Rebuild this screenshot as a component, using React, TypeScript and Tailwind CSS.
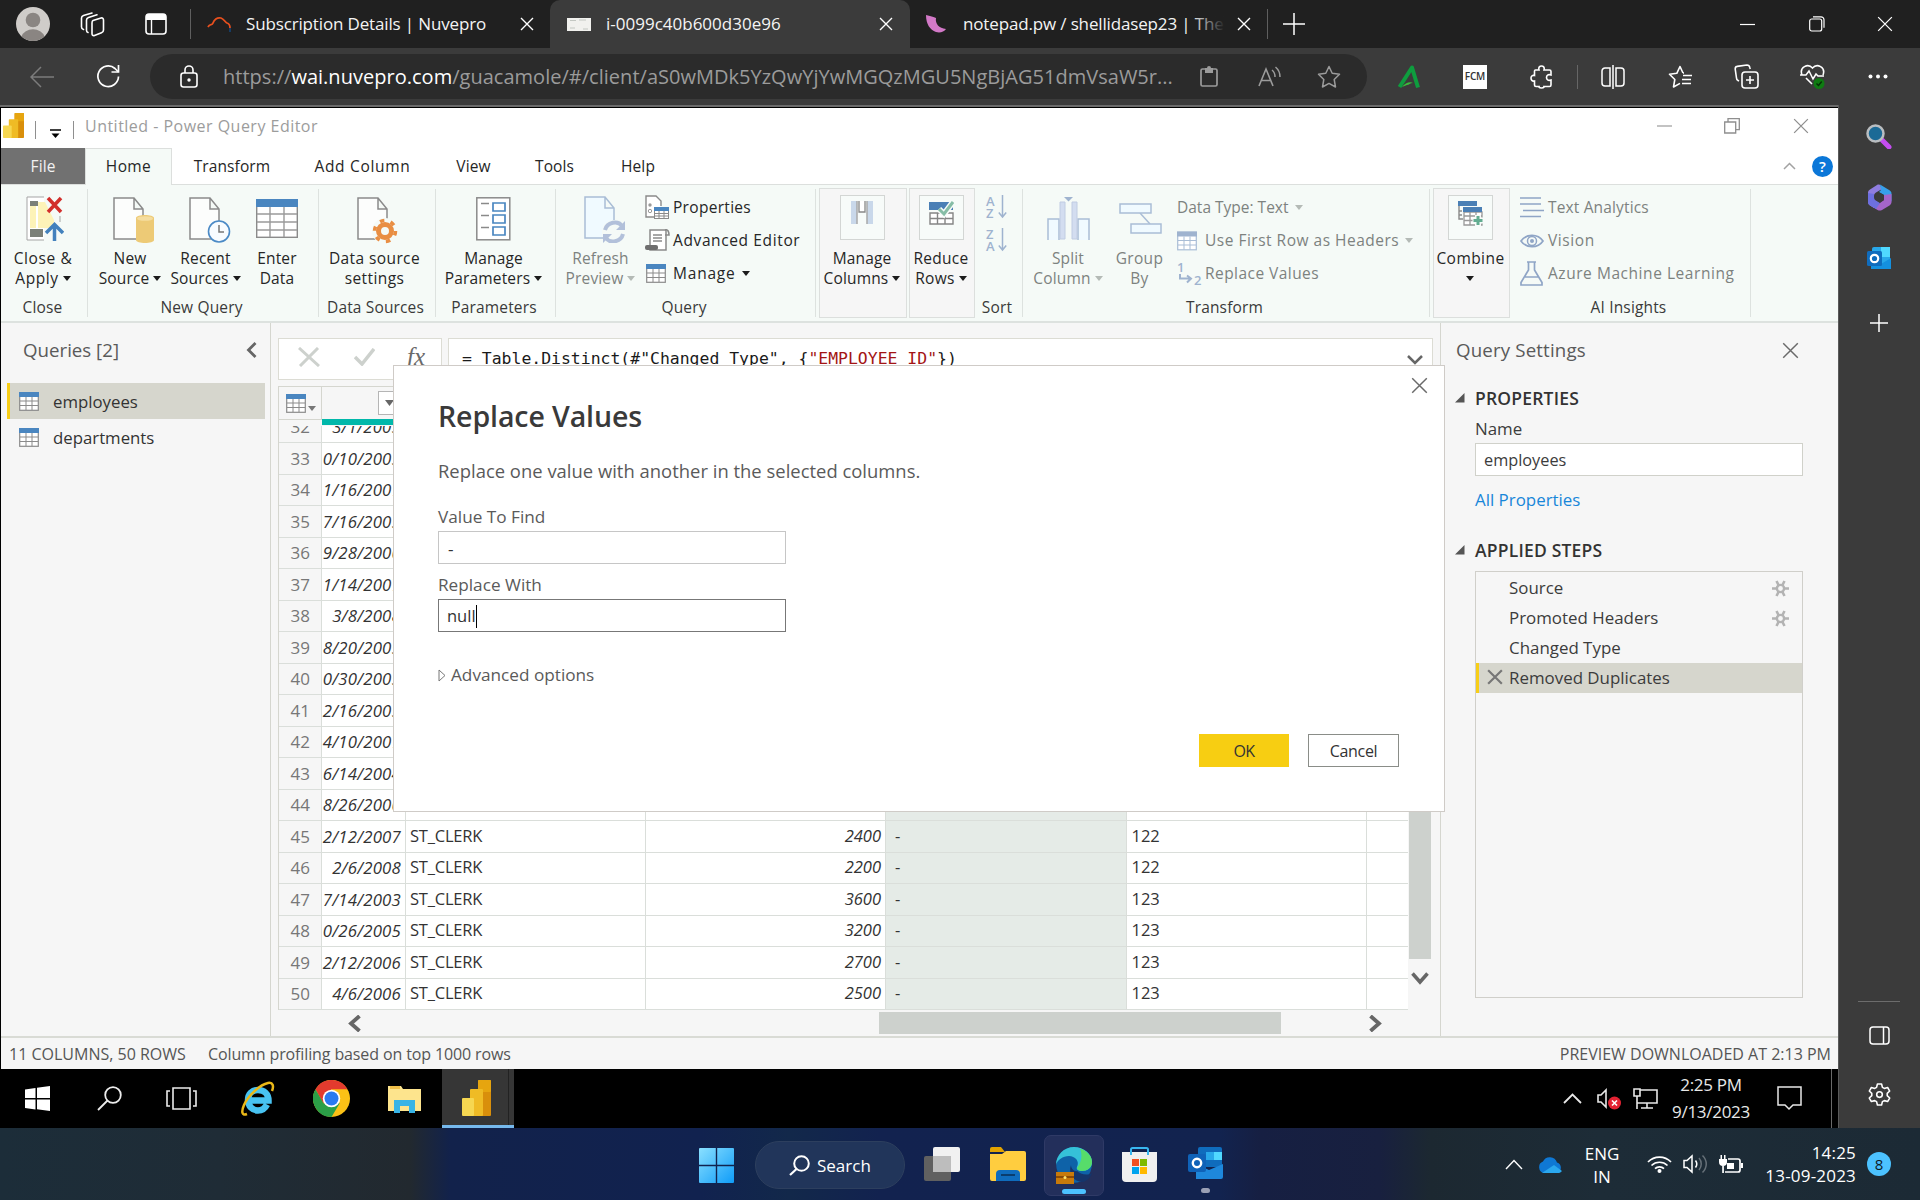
import React from "react";

type Kids = { children?: React.ReactNode; className?: string };

/* ---------- shared pieces ---------- */

function Ico({ w, h, vb, className = "", children }: { w: number; h: number; vb?: string } & Kids) {
  return (
    <svg width={w} height={h} viewBox={vb ?? `0 0 ${w} ${h}`} fill="none" className={`shrink-0 ${className}`}>
      {children}
    </svg>
  );
}

const Caret = ({ dim = false, className = "" }: { dim?: boolean; className?: string }) => (
  <Ico w={8} h={5} className={`inline-block align-middle ${className}`}>
    <path d="M0 0h8L4 5z" fill={dim ? "#b4bab6" : "#1c1c1c"} />
  </Ico>
);

const Cross = ({ size = 14, color = "#fff", width = 1.4, className = "" }: { size?: number; color?: string; width?: number; className?: string }) => (
  <Ico w={size} h={size} vb="0 0 14 14" className={className}>
    <path d="M1 1l12 12M13 1L1 13" stroke={color} strokeWidth={width} />
  </Ico>
);

const PowerBi = ({ w, h }: { w: number; h: number }) => (
  <svg width={w} height={h} viewBox="0 0 29 36" preserveAspectRatio="none" className="shrink-0">
    <rect x="16" y="0" width="13" height="36" rx="1" fill="#d98f0b" />
    <rect x="16" y="0" width="13" height="12" rx="1" fill="#e6a50f" />
    <rect x="8" y="9" width="13" height="27" rx="1" fill="#efbb25" />
    <rect x="0" y="18" width="12" height="18" rx="1" fill="#f6d751" />
  </svg>
);

const TableIcon = ({ w = 20, h = 19, head = "#4a86c0", line = "#8b8b8b" }: { w?: number; h?: number; head?: string; line?: string }) => (
  <Ico w={w} h={h} vb="0 0 20 19">
    <rect x=".7" y=".7" width="18.6" height="17.6" fill="#fff" stroke={line} strokeWidth="1.2" />
    <path d="M1 9h18M1 13.5h18M7 5v13M13 5v13" stroke={line} strokeWidth="1" />
    <rect x="0" y="0" width="20" height="5" fill={head} />
  </Ico>
);

/* ---------- browser chrome ---------- */

function TabStrip() {
  return (
    <div className="flex h-[48px] items-center bg-[#202020] text-[17px] tracking-[-0.15px] text-[#f4f4f4]">
      <Ico w={34} h={34} className="ml-[16px]">
        <circle cx="17" cy="17" r="17" fill="#cfccc9" />
        <circle cx="17" cy="13" r="7.3" fill="#8a8582" />
        <path d="M5.5 29.5a12 10 0 0123 0A17 17 0 0117 34 17 17 0 015.5 29.5z" fill="#8a8582" />
      </Ico>
      <Ico w={25} h={25} className="ml-[30px]">
        <path d="M13 8.500l8-2.500c1.600-.4 2.500.5 2.500 2v10c0 1.500-.6 2.300-2 2.800l-7 2.700c-1.600.5-2.500-.3-2.500-1.800V11c0-1.300.3-2.100 1-2.500z" stroke="#fff" strokeWidth="1.6" />
        <path d="M8 20.500c-1-.3-1.500-1.200-1.500-2.200V8c0-1.300.7-2.200 2-2.600L17 2.800M3.500 17.500c-1.200-.3-2-1.300-2-2.500V6c0-1.300.7-2.200 2-2.600L12 1" stroke="#fff" strokeWidth="1.6" strokeLinecap="round" />
      </Ico>
      <Ico w={22} h={22} className="ml-[40px]">
        <rect x="1" y="1" width="20" height="20" rx="3" stroke="#fff" strokeWidth="1.6" />
        <path d="M1 4a3 3 0 013-3h14a3 3 0 013 3v3H1z" fill="#fff" />
        <path d="M6.500 7v14" stroke="#fff" strokeWidth="1.4" />
      </Ico>
      <div className="ml-[23px] h-[30px] w-px bg-[#5f5f5f]" />
      <Ico w={24} h={17} className="ml-[16px]">
        <path d="M1 11c2-4 4-1 5-4s4-6 8-5c3 1 4 4 6 5 2 .5 3 2 3 5" stroke="#e8501e" strokeWidth="1.8" />
        <path d="M23 12v4" stroke="#17406b" strokeWidth="1.8" />
      </Ico>
      <div className="ml-[15px] w-[260px] shrink-0 whitespace-nowrap">Subscription Details | Nuvepro</div>
      <Cross className="ml-[14px]" />
      <div className="ml-[16px] flex h-full w-[360px] shrink-0 items-center rounded-t-[10px] bg-[#3b3b3b]">
        <Ico w={24} h={13} className="ml-[17px]">
          <rect width="24" height="13" fill="#f1f1ee" />
          <path d="M3 2.500h6M12 2h7M3 10h5M16 11h5" stroke="#c3c7c2" />
        </Ico>
        <div className="ml-[15px] w-[266px] shrink-0 whitespace-nowrap tracking-[0px]">i-0099c40b600d30e96</div>
        <Cross className="ml-[7px]" />
      </div>
      <Ico w={21} h={18} className="ml-[16px]">
        <path d="M0 0c4 1 8 2 10 3-1 6 3 10 10 11-2 3-6 4-10 3C4 15 0 9 0 0z" fill="#d279c7" />
      </Ico>
      <div className="relative ml-[16px] w-[262px] shrink-0 overflow-hidden whitespace-nowrap">
        notepad.pw / shellidasep23 | The
        <div className="absolute inset-y-0 right-0 w-[34px] bg-gradient-to-r from-transparent to-[#202020]" />
      </div>
      <Cross className="ml-[12px]" />
      <div className="ml-[16px] h-[30px] w-px bg-[#5f5f5f]" />
      <Ico w={22} h={22} className="ml-[15px]">
        <path d="M11 0v22M0 11h22" stroke="#fff" strokeWidth="1.5" />
      </Ico>
      <Ico w={15} h={15} className="ml-[435px]">
        <path d="M0 7.500h15" stroke="#fff" strokeWidth="1.2" />
      </Ico>
      <Ico w={16} h={16} className="ml-[54px]">
        <rect x=".7" y="3" width="12" height="12" rx="2" stroke="#fff" strokeWidth="1.2" />
        <path d="M4 .8h8a3 3 0 013 3v8" stroke="#fff" strokeWidth="1.2" />
      </Ico>
      <Cross size={16} width={1.1} className="ml-[52px]" />
    </div>
  );
}

function Toolbar() {
  return (
    <div className="flex h-[57px] items-center bg-[#3b3b3b]">
      <Ico w={24} h={22} className="ml-[30px]">
        <path d="M11 1L1 11l10 10M1 11h23" stroke="#7c7c7c" strokeWidth="1.500" />
      </Ico>
      <Ico w={25} h={25} className="ml-[42px]">
        <path d="M22.500 12.500a10.300 10.300 0 11-3.500-8l3.500 3.500" stroke="#fff" strokeWidth="1.700" />
        <path d="M22.500 1v7h-7" stroke="#fff" strokeWidth="1.700" />
      </Ico>
      <div className="ml-[29px] flex h-[45px] w-[1217px] shrink-0 items-center rounded-full bg-[#2b2b2b]">
        <Ico w={18} h={23} className="ml-[30px]">
          <rect x="1" y="8" width="16" height="14" rx="2.500" stroke="#fff" strokeWidth="1.600" />
          <path d="M5 8V5a4 4 0 018 0v3" stroke="#fff" strokeWidth="1.600" />
          <circle cx="9" cy="15" r="1.700" fill="#fff" />
        </Ico>
        <div className="ml-[25px] w-[962px] shrink-0 whitespace-nowrap text-[20px] tracking-[0.020px] text-[#9b9b9b]">
          https://<span className="text-white">wai.nuvepro.com</span>/guacamole/#/client/aS0wMDk5YzQwYjYwMGQzMGU5NgBjAG51dmVsaW5r...
        </div>
        <Ico w={18} h={21} className="ml-[15px]">
          <rect x="1" y="3" width="16" height="17" rx="1.500" stroke="#9b9b9b" strokeWidth="1.700" />
          <path d="M5 2h8v5H5z" fill="#9b9b9b" />
          <circle cx="9" cy="2" r="2" fill="#9b9b9b" />
        </Ico>
        <Ico w={24} h={21} className="ml-[40px]">
          <path d="M1 20L8 3l7 17M3.500 14.500h9" stroke="#9b9b9b" strokeWidth="1.600" />
          <path d="M14 4c2 1.500 3 4 3 7M17.500 1c3 2.500 4.500 5.500 4.500 10" stroke="#9b9b9b" strokeWidth="1.500" />
        </Ico>
        <Ico w={24} h={24} className="ml-[35px]" vb="0 0 24 24">
          <path d="M12 1.500l3.200 6.800 7.300 1-5.300 5.200 1.300 7.500-6.500-3.600L5.500 22l1.300-7.500L1.500 9.300l7.300-1z" stroke="#9b9b9b" strokeWidth="1.500" strokeLinejoin="round" />
        </Ico>
      </div>
      <Ico w={23} h={24} className="ml-[30px]">
        <path d="M2.500 22L15 2.500l6 20" stroke="#0e9d3e" strokeWidth="4" strokeLinejoin="round" />
        <path d="M5 22c3-4 8-6 11-4-3 0-4 2-6 2z" fill="#3dbb3d" />
      </Ico>
      <div className="ml-[43px] flex h-[24px] w-[24px] items-center justify-center bg-white text-[10px] font-semibold tracking-[-0.2px] text-[#333]">FCM</div>
      <Ico w={22} h={24} className="ml-[43px]">
        <path d="M5.500 5H9c-1-3 1-4 2.500-4S15 2 14 5h5.500c1 0 1.500.5 1.500 1.500V10c-3-1-4.500.5-4.500 2.500S18 16 21 15v5c0 1-.5 1.500-1.500 1.500H14s.5 1.500-2.500 1.500S9 21.500 9 21.500H6c-1 0-1.500-.5-1.500-1.500v-4C2 16.500 1 15 1 13s1.500-3 3.500-2.500V6c0-.6.400-1 1-1z" stroke="#fff" strokeWidth="1.600" />
      </Ico>
      <div className="ml-[25px] h-[24px] w-px bg-[#666]" />
      <Ico w={24} h={24} className="ml-[23px]">
        <path d="M9 3H4a3 3 0 00-3 3v12a3 3 0 003 3h5zM15 3h5a3 3 0 013 3v12a3 3 0 01-3 3h-5zM12 0v24" stroke="#fff" strokeWidth="1.500" />
      </Ico>
      <Ico w={25} h={24} className="ml-[43px]">
        <path d="M15 8l-3-6.500L8.800 8.300l-7.300 1 5.300 5.200L5.500 22l6.500-3.600" stroke="#fff" strokeWidth="1.600" strokeLinejoin="round" />
        <path d="M15 8h1M15 10.500h9M14 14.500h9M14 18.500h9" stroke="#fff" strokeWidth="1.500" />
      </Ico>
      <Ico w={25} h={25} className="ml-[41px]">
        <rect x="8" y="8" width="16" height="16" rx="3" stroke="#fff" strokeWidth="1.600" />
        <path d="M16 12v8M12 16h8M5 17l-1-.5c-1-.5-1.500-1.500-1.500-2.500L1.200 5c0-1.500 1-2.500 2-2.600L13 1c1.500 0 2.500 1 2.800 2.400l.4 1.600" stroke="#fff" strokeWidth="1.600" />
      </Ico>
      <Ico w={25} h={25} className="ml-[41px]">
        <path d="M2 11C-1 3 8-1 12.500 4 17-1 26 3 23 11M12 20l-6-6" stroke="#fff" strokeWidth="1.600" />
        <path d="M0 11h6l3-4 4 8 3-5 2 2h6" stroke="#fff" strokeWidth="1.500" />
        <circle cx="19" cy="19.500" r="5.500" fill="#0f7b12" />
        <path d="M16.500 19.500l2 2 3.200-4" stroke="#062f06" strokeWidth="1.400" />
      </Ico>
      <Ico w={20} h={5} className="ml-[43px]">
        <circle cx="2.500" cy="2.500" r="2" fill="#fff" />
        <circle cx="10" cy="2.500" r="2" fill="#fff" />
        <circle cx="17.500" cy="2.500" r="2" fill="#fff" />
      </Ico>
    </div>
  );
}

function EdgeSidebar() {
  return (
    <div className="flex w-[82px] shrink-0 flex-col items-center border-l border-[#5a5a5a] bg-[#3b3b3b] pr-px">
      <Ico w={26} h={25} className="mt-[19px]">
        <path d="M16 16l7 7" stroke="#c44df0" strokeWidth="5" strokeLinecap="round" />
        <circle cx="9.500" cy="9.500" r="8" fill="#1b6a96" stroke="#b9bdc0" strokeWidth="2.500" />
      </Ico>
      <Ico w={25} h={27} className="mt-[35px]">
        <path d="M10 1L3 5.500C1.500 6.500 1 7.500 1 9v9c0 1.500.7 2.700 2 3.500L7 24V12c0-1.500.7-2.700 2-3.500l6-3.500-2-4c-1-.6-2-.6-3 0z" fill="#8f7de0" />
        <path d="M13 .5l9.500 5.700c1.300.8 2 2 2 3.300v8L17 11l-5-3 2-2z" fill="#38a0ea" />
        <path d="M24.500 10v8c0 1.500-.8 2.700-2 3.400L15 26c-1.500.8-3 .8-4.500 0L5 22.500l8-3.500 4-3v-5z" fill="#a565c9" />
        <path d="M1 9v9c0 1.500.7 2.700 2 3.500L9 25l4-6-4-2.500C7.700 15.700 7 15 7 13v-3z" fill="#6d6fe0" />
        <path d="M12.500 8.500l4.500 2.500v5l-4.500 2.500-4-2.500v-5z" fill="#3b3b3b" />
      </Ico>
      <Ico w={25} h={25} className="mt-[35px]">
        <rect x="5" y="1" width="18" height="20" rx="2" fill="#28a8ea" />
        <path d="M14 1h9v10h-9z" fill="#50d9ff" />
        <path d="M4 23V12l10 6 10-6v11z" fill="#1490df" />
        <rect x="0" y="5" width="15" height="15" rx="1.500" fill="#0f6cbd" />
        <circle cx="7.500" cy="12.500" r="3.700" stroke="#fff" strokeWidth="2.200" />
      </Ico>
      <Ico w={18} h={18} className="mt-[43px]">
        <path d="M9 0v18M0 9h18" stroke="#fff" strokeWidth="1.500" />
      </Ico>
      <div className="mt-auto h-px w-[42px] bg-[#6c6c6c]" />
      <Ico w={21} h={19} className="mt-[24px]">
        <rect x="1" y="1" width="19" height="17" rx="3" stroke="#fff" strokeWidth="1.500" />
        <path d="M14.500 1v17" stroke="#fff" strokeWidth="1.500" />
      </Ico>
      <Ico w={25} h={26} vb="0 0 24 24" className="mb-[20px] mt-[37px]">
        <path d="M10 1.500h4l.8 3.200 1.800 1 3.200-.9 2 3.400-2.400 2.300v2.100l2.400 2.300-2 3.400-3.200-.9-1.800 1-.8 3.200h-4l-.8-3.200-1.800-1-3.200.9-2-3.400 2.400-2.300v-2.100L2.200 8.200l2-3.400 3.200.9 1.800-1z" stroke="#fff" strokeWidth="1.500" strokeLinejoin="round" />
        <circle cx="12" cy="11.600" r="2.700" stroke="#fff" strokeWidth="1.500" />
      </Ico>
    </div>
  );
}

/* ---------- Power Query: title and ribbon ---------- */

function TitleBar() {
  return (
    <div className="flex h-[40px] shrink-0 items-center bg-white pb-[4px]">
      <div className="-mt-px ml-[2px] flex">
        <PowerBi w={21} h={25} />
      </div>
      <div className="ml-[11px] mt-[8px] h-[18px] w-px bg-[#8f8f8f]" />
      <Ico w={11} h={10} className="ml-[14px] mt-[16px]">
        <path d="M0 1h11" stroke="#000" strokeWidth="1.500" />
        <path d="M1.500 4.500h8L5.500 9z" fill="#000" />
      </Ico>
      <div className="ml-[12px] mt-[8px] h-[18px] w-px bg-[#8f8f8f]" />
      <div className="-mt-px ml-[11px] w-[300px] whitespace-nowrap text-[16px] tracking-[0.480px] text-[#9c9c9c]">Untitled - Power Query Editor</div>
      <Ico w={15} h={16} className="ml-auto">
        <path d="M0 8h15" stroke="#a2a2a2" strokeWidth="1.300" />
      </Ico>
      <Ico w={16} h={16} className="ml-[52px]">
        <path d="M.7 4h11v11h-11zM4 4V.7h11.300v11H12" stroke="#8e8e8e" strokeWidth="1.300" />
      </Ico>
      <Cross size={16} color="#8e8e8e" width={1.100} className="ml-[53px] mr-[29px]" />
    </div>
  );
}

function RibbonTabs() {
  return (
    <div className="flex h-[37px] shrink-0 items-stretch border-b border-[#dcdfdd] bg-white text-[15.500px] tracking-[0.1px] text-[#262626]">
      <div className="flex w-[84px] items-center justify-center bg-[#717171] pt-px text-[#f2f2f2]">File</div>
      <div className="-mb-px flex w-[87px] items-center justify-center border-x border-t border-[#dcdfdd] bg-[#f5faf7] tracking-[0.400px]">Home</div>
      {[
        ["Transform", "w-[120px]"],
        ["Add Column", "w-[141px] tracking-[0.700px]"],
        ["View", "w-[81px]"],
        ["Tools", "w-[81px]"],
        ["Help", "w-[86px]"],
      ].map(([t, w]) => (
        <div key={t} className={`flex items-center justify-center whitespace-nowrap pt-px ${w}`}>{t}</div>
      ))}
      <div className="ml-auto flex items-center">
        <Ico w={13} h={8}>
          <path d="M1 7l5.500-5.500L12 7" stroke="#a2a2a2" strokeWidth="1.500" />
        </Ico>
        <div className="ml-[16px] mr-[5px] flex h-[21px] w-[21px] items-center justify-center rounded-full bg-[#0b77d8] text-[15px] font-semibold text-white">?</div>
      </div>
    </div>
  );
}

const DocShape = ({ dim = false }: { dim?: boolean }) => (
  <path d="M1 1h20l9 11v30H1z M21 1v11h9" fill={dim ? "#f0faff" : "#fcfdfc"} stroke={dim ? "#a9bdd6" : "#8a8a8a"} strokeWidth="1.500" />
);

function Big({ icon, a, b, caret, dim, className = "" }: { icon: React.ReactNode; a: string; b?: string; caret?: boolean; dim?: boolean } & Kids) {
  return (
    <div className={`flex shrink-0 flex-col items-center whitespace-nowrap leading-[19.500px] ${dim ? "text-[#7d827f]" : "text-[#262626]"} ${className}`}>
      <div className="-mt-[2px] flex h-[53px] items-start justify-center">{icon}</div>
      <div>{a}</div>
      <div className="flex items-center">
        {b}
        {caret && <Caret dim={dim} className={b ? "ml-[4px]" : "mt-[7px]"} />}
      </div>
    </div>
  );
}

function Small({ icon, text, caret, dim, className = "" }: { icon?: React.ReactNode; text: string; caret?: boolean; dim?: boolean } & Kids) {
  return (
    <div className={`flex h-[33px] items-center whitespace-nowrap ${dim ? "text-[#7d827f]" : "text-[#262626]"} ${className}`}>
      {icon && <div className="flex w-[28px] shrink-0 items-center">{icon}</div>}
      <span>{text}</span>
      {caret && <Caret dim={dim} className="ml-[6px]" />}
    </div>
  );
}

function Group({ label, className = "", children }: { label: string } & Kids) {
  return (
    <div className={`mt-[4px] flex h-[128px] shrink-0 flex-col border-r border-[#dde2df] ${className}`}>
      <div className="flex h-[109px] shrink-0 pt-[9px]">{children}</div>
      <div className="flex h-[20px] shrink-0 items-center justify-center whitespace-nowrap pr-[3px] text-[#3a3a3a]">{label}</div>
    </div>
  );
}

function Boxed({ className = "", children }: Kids) {
  return <div className={`mt-[3px] flex h-[130px] shrink-0 justify-center border border-[#dcdfdd] bg-[#f6f6f6] pr-[2px] pt-[9px] ${className}`}>{children}</div>;
}

const Framed = ({ children }: Kids) => (
  <div className="-mt-px flex h-[45px] w-[45px] justify-center border border-[#d3d6d4] bg-[#f7fbf9] pt-[5px]">{children}</div>
);

function Ribbon() {
  return (
    <div className="flex h-[138px] shrink-0 border-b-2 border-[#dde2df] bg-[#f5faf7] text-[15.500px] tracking-[0.150px]">
      <Group label="Close" className="w-[87px]">
        <Big
          className="w-[84px] tracking-[0.600px]"
          a="Close &"
          b="Apply"
          caret
          icon={
            <Ico w={38} h={46} className="ml-[3px]">
              <path d="M18 1H1v43h17" fill="#fff" stroke="#a5a5a5" />
              <path d="M4 10h6v22H4zM12 6h7l9 18v8H12z" fill="#fdf3b8" />
              <path d="M4 5h8v5H4zM4 33h13v8H4z" fill="#7b8078" />
              <path d="M22 2l13 14M35 2L22 16" stroke="#d22f2c" strokeWidth="3.500" />
              <path d="M28.500 45V30M20 37l8.500-8.500L37 37" stroke="#4381bd" strokeWidth="3.500" />
              <path d="M34 20v6" stroke="#a5a5a5" />
            </Ico>
          }
        />
      </Group>
      <Group label="New Query" className="w-[231px]">
        <Big
          className="ml-[3px] w-[78px]"
          a="New"
          b="Source"
          caret
          icon={
            <Ico w={42} h={47} className="ml-[8px] mt-[1px]">
              <DocShape />
              <path d="M23 21c0-4 18-4 18 0v22c0 4-18 4-18 0z" fill="#edca76" />
              <ellipse cx="32" cy="21.500" rx="8" ry="2.300" fill="#f5dd9f" />
            </Ico>
          }
        />
        <Big
          className="w-[73px]"
          a="Recent"
          b="Sources"
          caret
          icon={
            <Ico w={42} h={47} className="ml-[8px] mt-[1px]">
              <DocShape />
              <circle cx="30" cy="34.500" r="10.500" fill="#f8fcff" stroke="#4b8ac6" strokeWidth="1.600" />
              <path d="M30 28v7h5" stroke="#777" strokeWidth="1.500" />
            </Ico>
          }
        />
        <Big
          className="w-[70px]"
          a="Enter"
          b="Data"
          icon={
            <Ico w={42} h={39} className="mt-[3px]">
              <rect x=".7" y=".7" width="40.600" height="37.600" fill="#fff" stroke="#8b8b8b" strokeWidth="1.400" />
              <path d="M1 15h40M1 23h40M1 31h40M14 8v30M28 8v30" stroke="#9a9a9a" strokeWidth="1.400" />
              <rect width="42" height="8" fill="#4a86c0" />
            </Ico>
          }
        />
      </Group>
      <Group label="Data Sources" className="w-[117px]">
        <Big
          className="w-[111px] tracking-[0.400px]"
          a="Data source"
          b="settings"
          icon={
            <Ico w={42} h={47} className="ml-[6px] mt-[1px]">
              <DocShape />
              <circle cx="28" cy="34" r="13" fill="#f5faf7" />
              <circle cx="28" cy="34" r="6.500" stroke="#e98e43" strokeWidth="5" />
              <circle cx="28" cy="34" r="10.500" stroke="#e98e43" strokeWidth="3.500" strokeDasharray="4.500 6.500" />
            </Ico>
          }
        />
      </Group>
      <Group label="Parameters" className="w-[120px]">
        <Big
          className="w-[115px]"
          a="Manage"
          b="Parameters"
          caret
          icon={
            <Ico w={35} h={44} className="mt-[1px]">
              <rect x=".8" y=".8" width="33" height="42" fill="#fff" stroke="#8a8a8a" strokeWidth="1.500" />
              <path d="M5 6.500h8M5 18.500h8M5 30.500h8" stroke="#8a8a8a" strokeWidth="1.500" />
              <path d="M17 6h12v8H17zM17 18h12v8H17zM17 30h12v8H17z" stroke="#4a86c0" strokeWidth="1.700" />
            </Ico>
          }
        />
      </Group>
      <Group label="Query" className="w-[260px]">
        <Big
          dim
          className="w-[89px]"
          a="Refresh"
          b="Preview"
          caret
          icon={
            <Ico w={42} h={47} className="ml-[8px]">
              <DocShape dim />
              <circle cx="30" cy="36" r="12" fill="#f5faf7" />
              <path d="M21 34c2-8 13-10 17-4M39 38c-2 8-13 10-17 4" stroke="#b2c0da" strokeWidth="4" />
              <path d="M41 25v9h-9zM19 47v-9h9z" fill="#b2c0da" />
            </Ico>
          }
        />
        <div>
          <Small
            className="-mt-[7px] tracking-[0.300px]"
            text="Properties"
            icon={
              <Ico w={25} h={25}>
                <path d="M9 22H1V1h10l5 5v5" fill="#fff" stroke="#8a8a8a" strokeWidth="1.400" />
                <circle cx="5" cy="10" r="1.700" fill="#9a9a9a" />
                <circle cx="5" cy="16" r="1.700" stroke="#9a9a9a" />
                <rect x="9.500" y="12.500" width="14" height="11" fill="#fff" stroke="#8a8a8a" />
                <path d="M9 18.500h15M9 21h15M14 15v9M19 15v9" stroke="#8a8a8a" />
                <path d="M9 12h15v4H9z" fill="#4a86c0" />
              </Ico>
            }
          />
          <Small
            className="tracking-[0.620px]"
            text="Advanced Editor"
            icon={
              <Ico w={25} h={23}>
                <path d="M5 1h16v20H5z" fill="#fff" stroke="#8a8a8a" strokeWidth="1.500" />
                <path d="M20 1c3-1 4 2 4 5h-4M8 6h9M8 9h9M8 12h9" stroke="#8a8a8a" strokeWidth="1.600" />
                <rect x="0" y="16" width="13" height="5" rx="2" fill="#6e6e6e" />
              </Ico>
            }
          />
          <Small className="tracking-[0.800px]" text="Manage" caret icon={<div className="ml-px flex"><TableIcon /></div>} />
        </div>
      </Group>
      <Boxed className="ml-[3px] w-[88px]">
        <Big
          a="Manage"
          b="Columns"
          caret
          icon={
            <Framed>
              <Ico w={23} h={24}>
                <path d="M0 0h6v23H0zM16 0h6v23h-6z" fill="#c9d8ea" />
                <path d="M6 0v23M16 0v23" stroke="#a9a9a9" strokeWidth="1.500" />
                <path d="M8 0v11h6V0" fill="#fff" stroke="#888" strokeWidth="1.300" />
              </Ico>
            </Framed>
          }
        />
      </Boxed>
      <Boxed className="ml-[2px] w-[66px]">
        <Big
          a="Reduce"
          b="Rows"
          caret
          className="tracking-[0.300px]"
          icon={
            <Framed>
              <Ico w={25} h={24}>
                <path d="M0 1h24v8H0z" fill="#4a7fb5" />
                <path d="M1 12h23v11H1zM1 17.500h23M8.500 12v11M16 12v11" fill="#fff" stroke="#858585" strokeWidth="1.400" />
                <path d="M10 8l5 5L24 1" stroke="#f7fbf9" strokeWidth="6" />
                <path d="M10 8l5 5L24 1" stroke="#86bda6" strokeWidth="3" />
              </Ico>
            </Framed>
          }
        />
      </Boxed>
      <Group label="Sort" className="w-[48px]">
        <div className="-mt-[3px] ml-[11px] flex flex-col gap-[9px]">
          {[["A", "Z"], ["Z", "A"]].map(([p, q]) => (
            <div key={p} className="flex h-[24px]">
              <div className="flex w-[12px] flex-col text-[13px] font-semibold leading-[12px] text-[#9fb3cf]">
                <span>{p}</span>
                <span>{q}</span>
              </div>
              <Ico w={9} h={24}>
                <path d="M4.500 0v22M.8 17.500l3.700 4.500 3.700-4.500" stroke="#9fb3cf" strokeWidth="1.500" />
              </Ico>
            </div>
          ))}
        </div>
      </Group>
      <Group label="Transform" className="w-[407px]">
        <Big
          dim
          className="ml-[2px] w-[86px]"
          a="Split"
          b="Column"
          caret
          icon={
            <Ico w={43} h={43} className="mt-[1px]">
              <path d="M17 0h9l-4.500 4.500z" fill="#9fb3cf" />
              <path d="M1 43V22h11v21M31 43V22h11v21" fill="#f0faff" stroke="#a9bdd6" strokeWidth="1.500" />
              <path d="M13 5h5v37h-5zM25 5h5v37h-5z" fill="#d3ddf0" stroke="#c0cce2" />
            </Ico>
          }
        />
        <Big
          dim
          className="w-[57px] tracking-[0.300px]"
          a="Group"
          b="By"
          icon={
            <Ico w={43} h={31} className="ml-[2px] mt-[7px]">
              <path d="M21 10l10 11" stroke="#a9bdd6" strokeWidth="1.500" />
              <path d="M1 1h31v9H1zM12 21h30v9H12z" fill="#f0faff" stroke="#a9bdd6" strokeWidth="1.500" />
            </Ico>
          }
        />
        <div className="ml-[9px]">
          <Small dim className="-mt-[7px] tracking-[0px]" text="Data Type: Text" caret />
          <Small dim className="tracking-[0.500px]" text="Use First Row as Headers" caret icon={<TableIcon w={20} h={20} head="#9fb3cf" line="#a9bdd6" />} />
          <Small
            dim
            className="tracking-[0.450px]"
            text="Replace Values"
            icon={
              <div className="flex h-[26px] flex-col text-[13px] font-semibold leading-[13px] tracking-[0px] text-[#9fb3cf]">
                <span>1</span>
                <span className="flex">
                  <Ico w={15} h={10} className="ml-[2px]">
                    <path d="M1 0v4.500h10M8 1.500l4 3-4 4" stroke="#9fb3cf" strokeWidth="2" />
                  </Ico>
                  2
                </span>
              </div>
            }
          />
        </div>
      </Group>
      <Boxed className="ml-[3px] w-[77px]">
        <Big
          a="Combine"
          className="tracking-[0.450px]"
          caret
          icon={
            <Framed>
              <Ico w={25} h={26}>
                <path d="M0 0h19v5H0z" fill="#4a7fb5" />
                <path d="M1 5v13h4M1 10h3M1 14h3" stroke="#8a8a8a" strokeWidth="1.400" />
                <path d="M6 11h18v13H6zM6 15h18M6 19.500h18M12 11v13M18 11v13" fill="#fff" stroke="#999" strokeWidth="1.300" />
                <path d="M5 6h19v5H5z" fill="#4a7fb5" />
                <path d="M20 14v11M14.500 19.500h11" stroke="#f7fbf9" strokeWidth="6" />
                <path d="M20 15v9M15.500 19.500h9" stroke="#62ac90" strokeWidth="3" />
              </Ico>
            </Framed>
          }
        />
      </Boxed>
      <Group label="AI Insights" className="w-[241px]">
        <div className="ml-[10px]">
          <Small
            dim
            className="-mt-[7px]"
            text="Text Analytics"
            icon={
              <Ico w={24} h={21}>
                <path d="M0 1h21M0 7h21M3 13.500h21M0 19.500h21" stroke="#8fa5c6" strokeWidth="1.700" />
              </Ico>
            }
          />
          <Small
            dim
            text="Vision"
            className="tracking-[0.600px]"
            icon={
              <Ico w={24} h={14}>
                <path d="M1 7c5-7.500 17-7.500 22 0-5 7.500-17 7.500-22 0z" stroke="#8fa5c6" strokeWidth="1.700" />
                <circle cx="12" cy="7" r="4.500" stroke="#8fa5c6" strokeWidth="1.500" />
                <circle cx="12" cy="7" r="2" fill="#8fa5c6" />
              </Ico>
            }
          />
          <Small
            dim
            text="Azure Machine Learning"
            className="tracking-[0.550px]"
            icon={
              <Ico w={23} h={25}>
                <path d="M7 1h9M8.500 1v8L1 21.500V24h21v-2.500L14.500 9V1M5 16h13" stroke="#8fa5c6" strokeWidth="1.700" />
              </Ico>
            }
          />
        </div>
      </Group>
    </div>
  );
}

/* ---------- Power Query: body ---------- */

function QueriesPane() {
  return (
    <div className="w-[270px] shrink-0 border-r border-[#d5d6cf] text-[16.800px]">
      <div className="mt-[15px] flex h-[24px] items-center text-[#5a5a5a]">
        <span className="ml-[22px] text-[18.700px]">Queries [2]</span>
        <Ico w={11} h={16} className="ml-auto mr-[13px]">
          <path d="M9.500 1L2.500 8l7 7" stroke="#666" strokeWidth="2.800" />
        </Ico>
      </div>
      <div className="ml-[6px] mt-[21px] flex h-[36px] w-[258px] items-center border-l-[3px] border-[#f7ce17] bg-[#d6d6cd] pl-[9px] text-[#333]">
        <TableIcon />
        <span className="ml-[14px] pt-px">employees</span>
      </div>
      <div className="ml-[6px] flex h-[36px] w-[258px] items-center pl-[12px] text-[#333]">
        <TableIcon />
        <span className="ml-[14px] pt-px">departments</span>
      </div>
    </div>
  );
}

type Row = { n: number; hired: string; job?: string; salary?: string; pct?: string; mgr?: string };

const clerk = (n: number, hired: string, salary: string, mgr: string): Row => ({ n, hired, job: "ST_CLERK", salary, pct: "-", mgr });

const rows: Row[] = [
  { n: 32, hired: "3/1/2005" },
  { n: 33, hired: "0/10/2005" },
  { n: 34, hired: "1/16/2007" },
  { n: 35, hired: "7/16/2005" },
  { n: 36, hired: "9/28/2006" },
  { n: 37, hired: "1/14/2007" },
  { n: 38, hired: "3/8/2008" },
  { n: 39, hired: "8/20/2005" },
  { n: 40, hired: "0/30/2005" },
  { n: 41, hired: "2/16/2005" },
  { n: 42, hired: "4/10/2007" },
  { n: 43, hired: "6/14/2004" },
  { n: 44, hired: "8/26/2006", job: "ST_CLERK" },
  clerk(45, "2/12/2007", "2400", "122"),
  clerk(46, "2/6/2008", "2200", "122"),
  clerk(47, "7/14/2003", "3600", "123"),
  clerk(48, "0/26/2005", "3200", "123"),
  clerk(49, "2/12/2006", "2700", "123"),
  clerk(50, "4/6/2006", "2500", "123"),
];

function DataGrid() {
  const cell = "flex items-center border-r border-b border-[#dadeda]";
  return (
    <div className="ml-[7px] mt-[6px] h-[624px] w-[1130px] overflow-hidden border-l border-t border-[#d5d6cf]">
      <div className="flex h-[39px]">
        <div className="flex h-[33px] w-[43px] shrink-0 items-center border-r border-b border-[#d5d6cf] pl-[7px]">
          <TableIcon />
          <Ico w={8} h={5} className="ml-[2px] mt-[10px]">
            <path d="M0 0h8L4 5z" fill="#777" />
          </Ico>
        </div>
        <div className="flex flex-1 flex-col">
          <div className="flex h-[32px] items-center">
            <div className="ml-[56px] flex h-[24px] w-[22px] items-center justify-center border border-[#b5b5b5] bg-white">
              <Ico w={9} h={6}>
                <path d="M0 0h9L4.500 6z" fill="#666" />
              </Ico>
            </div>
          </div>
          <div className="h-[6px] w-[84px] bg-[#01b8aa]" />
        </div>
      </div>
      <div className="flex h-[584px] flex-col justify-end overflow-hidden text-[16.500px] text-[#333]">
        {rows.map((r) => (
          <div key={r.n} className="grid h-[31.500px] shrink-0 grid-cols-[43px_84px_240px_240px_240.500px_240px_42px] bg-white">
            <div className={`${cell} justify-end bg-[#f6f6f6] pr-[11px] text-[17px] text-[#777]`}>{r.n}</div>
            <div className={`${cell} justify-end overflow-hidden pr-[4px] text-[16.800px] italic tracking-[0.200px]`}>{r.hired}</div>
            <div className={`${cell} pl-[4px] tracking-[-0.200px]`}>{r.job}</div>
            <div className={`${cell} justify-end pr-[4px] italic`}>{r.salary}</div>
            <div className={`${cell} bg-[#e5ebe7] pl-[9px]`}>{r.pct}</div>
            <div className={`${cell} pl-[5px]`}>{r.mgr}</div>
            <div className="border-b border-[#dadeda]" />
          </div>
        ))}
      </div>
    </div>
  );
}

function CenterPane() {
  return (
    <div className="flex min-w-0 flex-1 flex-col">
      <div className="ml-[7px] mt-[15px] flex h-[42px] shrink-0">
        <div className="flex w-[164px] shrink-0 items-center border border-[#dcdcd4] bg-white">
          <Ico w={22} h={20} className="-mt-[4px] ml-[19px]">
            <path d="M1 1l20 18M20 1L2 19" stroke="#cdd1cd" strokeWidth="3" />
          </Ico>
          <Ico w={21} h={18} className="-mt-[5px] ml-[34px]">
            <path d="M1 9l7 7L20 1" stroke="#cdd1cd" strokeWidth="3.500" />
          </Ico>
          <span className="-mt-[4px] ml-[32px] font-['Liberation_Serif'] text-[25px] italic text-[#6a6a6a]">fx</span>
        </div>
        <div className="ml-[6px] flex w-[985px] items-center border border-[#dcdcd4] bg-white pt-px font-['DejaVu_Sans_Mono',monospace] text-[16.450px] text-[#1a1a1a]">
          <span className="ml-[13px] whitespace-pre">
            = Table.Distinct(#"Changed Type", {"{"}
            <span className="text-[#a31515]">"EMPLOYEE_ID"</span>
            {"})"}
          </span>
          <Ico w={16} h={10} className="ml-auto mr-[9px]">
            <path d="M1 1l7 7 7-7" stroke="#666" strokeWidth="2.500" />
          </Ico>
        </div>
      </div>
      <div className="flex">
        <DataGrid />
        <div className="mt-[6px] flex h-[625px] w-[24px] flex-col items-center">
          <div className="h-[573px] w-[22px] bg-[#cdd1cd]" />
          <Ico w={18} h={14} className="mt-[13px]">
            <path d="M1.500 1.500L9 10l7.500-8.500" stroke="#666" strokeWidth="3.500" />
          </Ico>
        </div>
      </div>
      <div className="flex h-[24px] items-center">
        <Ico w={13} h={17} className="ml-[77px]">
          <path d="M11.500 1L3 8.500l8.500 7.500" stroke="#666" strokeWidth="3.800" />
        </Ico>
        <div className="ml-[518px] h-[22px] w-[402px] bg-[#cdd1cd]" />
        <Ico w={13} h={17} className="ml-[88px]">
          <path d="M1.500 1L10 8.500 1.500 16" stroke="#666" strokeWidth="3.800" />
        </Ico>
      </div>
    </div>
  );
}

const StepGear = () => (
  <Ico w={17} h={17}>
    <circle cx="8.500" cy="8.500" r="3.600" stroke="#b3b3b3" strokeWidth="2.400" />
    <path d="M0 8.500h4.500M12.500 8.500H17M4.500 1l2 4M12.500 1l-2 4M4.500 16l2-4M12.500 16l-2-4" stroke="#b3b3b3" strokeWidth="2.600" />
  </Ico>
);

const Fold = () => (
  <Ico w={10} h={10}>
    <path d="M9.500 0v9.500H0z" fill="#555" />
  </Ico>
);

function SettingsPane() {
  return (
    <div className="flex w-[398px] shrink-0 flex-col border-l border-[#d5d6cf] text-[16.900px] text-[#3c3c3c]">
      <div className="mt-[15px] flex h-[24px] items-center">
        <span className="ml-[15px] text-[18.700px] tracking-[0.150px] text-[#5a5a5a]">Query Settings</span>
        <Cross size={17} color="#6a6a6a" width={1.200} className="ml-auto mr-[39px]" />
      </div>
      <div className="mt-[23px] flex h-[26px] items-center text-[17.500px] font-semibold tracking-[0.200px] text-[#333]">
        <div className="w-[34px] pl-[14px]"><Fold /></div>PROPERTIES
      </div>
      <div className="ml-[34px] mt-[5px] flex h-[26px] items-center">Name</div>
      <div className="ml-[34px] mt-px flex h-[33px] w-[328px] items-center border border-[#d0d1ca] bg-white pl-[8px] pt-[2px] text-[16.300px]">employees</div>
      <div className="ml-[34px] mt-[11px] flex h-[26px] items-center text-[#1886d9]">All Properties</div>
      <div className="mt-[24px] flex h-[26px] items-center text-[17.500px] font-semibold tracking-[0.200px] text-[#333]">
        <div className="w-[34px] pl-[14px]"><Fold /></div>APPLIED STEPS
      </div>
      <div className="ml-[34px] mt-[8px] h-[427px] w-[328px] border border-[#d0cfca] pt-px">
        {["Source", "Promoted Headers", "Changed Type"].map((s, i) => (
          <div key={s} className="flex h-[30px] items-center pl-[33px] pr-[13px]">
            <span className="flex-1">{s}</span>
            {i < 2 && <StepGear />}
          </div>
        ))}
        <div className="flex h-[30px] items-center border-l-[3px] border-[#f7ce17] bg-[#d6d6cd]">
          <Cross size={16} color="#777" width={1.900} className="-mt-[2px] ml-[8px] mr-[6px]" />
          Removed Duplicates
        </div>
      </div>
    </div>
  );
}

function ReplaceDialog() {
  return (
    <div className="absolute left-[393px] top-[258px] flex h-[447px] w-[1052px] flex-col border border-[#cfcbc7] bg-white pl-[44px] text-[17.200px] text-[#5a5a5a]">
      <Cross size={17} color="#6a6a6a" width={1.200} className="ml-auto mr-[16px] mt-[11px]" />
      <div className="mt-[4px] flex h-[36px] items-center text-[28.500px] font-semibold tracking-[-0.100px] text-[#3a3a3a]">Replace Values</div>
      <div className="mt-[23px] flex h-[28px] items-center text-[18.400px] tracking-[0.020px]">Replace one value with another in the selected columns.</div>
      <div className="mt-[19px] flex h-[26px] items-center">Value To Find</div>
      <div className="mt-px flex h-[33px] w-[348px] items-center border border-[#c6c6c6] pl-[9px] pt-[2px] text-[#333]">-</div>
      <div className="mt-[8px] flex h-[26px] items-center">Replace With</div>
      <div className="mt-px flex h-[33px] w-[348px] items-center border border-[#777] pl-[8px] pt-[2px] text-[16.500px] text-[#333]">
        null<span className="h-[23px] w-[1.500px] bg-black" />
      </div>
      <div className="mt-[30px] flex h-[26px] items-center">
        <Ico w={8} h={13} className="mr-[5px]">
          <path d="M1 1l6 5.500L1 12z" stroke="#777" />
        </Ico>
        Advanced options
      </div>
      <div className="mt-[46px] flex text-[16px] text-[#333]">
        <div className="ml-[761px] flex h-[33px] w-[90px] items-center justify-center bg-[#f7ce12] tracking-[-0.500px]">OK</div>
        <div className="ml-[19px] flex h-[33px] w-[91px] items-center justify-center border border-[#8a8d88] tracking-[-0.300px]">Cancel</div>
      </div>
    </div>
  );
}

function StatusBar() {
  return (
    <div className="flex h-[33px] shrink-0 items-center border-t-2 border-[#d9dbd5] bg-[#f6f6f6] pt-px text-[16px] text-[#555]">
      <span className="ml-[8px] w-[199px] whitespace-nowrap">11 COLUMNS, 50 ROWS</span>
      <span className="tracking-[-0.120px]">Column profiling based on top 1000 rows</span>
      <span className="ml-auto mr-[7px]">PREVIEW DOWNLOADED AT 2:13 PM</span>
    </div>
  );
}

function RemoteTaskbar() {
  return (
    <div className="flex h-[59px] shrink-0 items-center bg-black text-[17px] text-[#e8e8e8]">
      <Ico w={25} h={25} className="ml-[24px]">
        <path d="M0 3.500L10.500 2v10H0zM12 1.800L25 0v12H12zM0 13.500h10.500v10L0 22zM12 13.500h13V25l-13-1.800z" fill="#fff" />
      </Ico>
      <Ico w={25} h={25} className="ml-[47px]">
        <circle cx="16" cy="9" r="7.800" stroke="#ececec" strokeWidth="1.800" />
        <path d="M10.500 14.500L1 24" stroke="#ececec" strokeWidth="1.800" />
      </Ico>
      <Ico w={31} h={23} className="ml-[44px]">
        <path d="M7 1h17v21H7zM4 4H1v15h3M27 4h3v15h-3" stroke="#ececec" strokeWidth="1.600" />
      </Ico>
      <Ico w={36} h={36} className="ml-[43px]">
        <path d="M27 23.500c-2 4-5 6-9 6-5.500 0-10-4.500-10-10.500S12 9 18 9s10.500 4 10.500 10.500H11" stroke="#48c3f2" strokeWidth="6.500" />
        <path d="M32 10c2-5 1-9-4-8C20 3.500 8 15 4 24c-3 7-2 11 3 9" stroke="#eab818" strokeWidth="2.500" />
      </Ico>
      <Ico w={37} h={37} className="ml-[37px]" vb="0 0 36 36">
        <circle cx="18" cy="18" r="18" fill="#fbc116" />
        <path d="M2.400 9A18 18 0 0133.600 9H18l-8 13.500z" fill="#e33b2e" />
        <path d="M2.400 9A18 18 0 0018 36l8-13.500H10.200z" fill="#2b9f47" />
        <circle cx="18" cy="18" r="8.500" fill="#fff" />
        <circle cx="18" cy="18" r="6.800" fill="#2a7af0" />
      </Ico>
      <Ico w={33} h={28} className="ml-[38px]">
        <path d="M0 1h13l2 3h18v22H0z" fill="#fde48d" />
        <path d="M2 1h10v3H2z" fill="#f0c04a" />
        <path d="M6 15h21v13h-6v-7h-9v7H6z" fill="#38b4e6" />
      </Ico>
      <div className="ml-[21px] flex h-full w-[72px] items-stretch border-b-[3px] border-[#76b9ed] bg-[#363636]">
        <div className="flex w-[67px] items-center justify-center border-r border-[#222] pl-[3px] pt-[2px]">
          <PowerBi w={29} h={36} />
        </div>
      </div>
      <Ico w={19} h={11} className="ml-auto">
        <path d="M1 10l8.500-8.500L18 10" stroke="#e8e8e8" strokeWidth="1.800" />
      </Ico>
      <Ico w={25} h={22} className="ml-[15px]">
        <path d="M9 2v17l-5-5H1V7h3z" stroke="#e8e8e8" strokeWidth="1.600" />
        <circle cx="17.500" cy="15" r="6.500" fill="#e32232" />
        <path d="M15 12.500l5 5M20 12.500l-5 5" stroke="#fff" strokeWidth="1.600" />
      </Ico>
      <Ico w={25} h={22} className="ml-[11px]">
        <path d="M7 2h17v13H4M8 20h12M14 15v5" stroke="#e8e8e8" strokeWidth="1.600" />
        <path d="M1 1h6v7H1zM4 8v13" stroke="#e8e8e8" strokeWidth="1.600" />
      </Ico>
      <div className="-mt-[2px] ml-[11px] flex w-[84px] flex-col items-center whitespace-nowrap leading-[27px] tracking-[-0.300px]">
        <span>2:25 PM</span>
        <span>9/13/2023</span>
      </div>
      <Ico w={25} h={25} className="ml-[24px]">
        <path d="M1 1h23v18h-8l-4 4-4-4H1z" stroke="#e8e8e8" strokeWidth="1.500" />
      </Ico>
      <div className="ml-[29px] mr-[6px] h-full w-px bg-[#6a6a6a]" />
    </div>
  );
}

/* ---------- host taskbar ---------- */

function HostTaskbar() {
  return (
    <div className="flex h-[72px] items-center bg-[linear-gradient(90deg,#1c2d39_0px,#1f2c36_220px,#22292f_410px,#12224b_450px,#11224f_700px,#12284a_790px,#12224f_880px,#12234f_1220px,#161f42_1260px,#18203f_1380px,#1c2831_1430px,#1d2c37_1600px,#1c2a35_1920px)] text-[17px] text-white">
      <Ico w={35} h={35} className="ml-[699px] mt-[2px]">
        <defs>
          <linearGradient id="win" x1="0" y1="0" x2="1" y2="1">
            <stop offset="0" stopColor="#8ae0ff" />
            <stop offset="1" stopColor="#0f9cf8" />
          </linearGradient>
        </defs>
        <path d="M0 1a1 1 0 011-1h15.800v16.800H0zM18.200 0H34a1 1 0 011 1v15.800H18.200zM0 18.200h16.800V35H1a1 1 0 01-1-1zM18.200 18.200H35V34a1 1 0 01-1 1H18.200z" fill="url(#win)" />
      </Ico>
      <div className="ml-[21px] mt-[2px] flex h-[48px] w-[150px] shrink-0 items-center rounded-full border border-[#2d3f5e] bg-[#21355a]">
        <Ico w={21} h={21} className="ml-[33px]">
          <circle cx="12.500" cy="8.500" r="7.300" stroke="#fff" strokeWidth="2" />
          <path d="M7.500 14L1 20" stroke="#fff" strokeWidth="2.200" />
        </Ico>
        <span className="ml-[7px] pt-px text-[17px]">Search</span>
      </div>
      <Ico w={36} h={34} className="ml-[19px]">
        <rect x="9" width="27" height="25" rx="2" fill="#f1f1f1" />
        <rect y="9" width="27" height="25" rx="2" fill="#606060" />
        <path d="M9 9h18v16H9z" fill="#bdbdbd" />
      </Ico>
      <Ico w={36} h={34} className="ml-[30px]">
        <path d="M0 2a2 2 0 012-2h9l4 5H0z" fill="#e2a300" />
        <path d="M0 7h12l4-3h18a2 2 0 012 2v26a2 2 0 01-2 2H2a2 2 0 01-2-2z" fill="#ffcd3f" />
        <path d="M6 34v-7a4 4 0 014-4h16a4 4 0 014 4v7z" fill="#0f6cbd" />
        <path d="M11 28h14" stroke="#0a3d6e" strokeWidth="2" />
      </Ico>
      <div className="ml-[18px] mt-[2px] flex h-[61px] w-[60px] shrink-0 flex-col items-center rounded-[7px] border border-[#2f3a66] bg-[#232f5b] pt-[11px]">
        <Ico w={36} h={37}>
          <circle cx="18" cy="18" r="17.800" fill="#0e62a8" />
          <path d="M0 18C0 8 8 0 18 0s18 7 18 15c0 6-5 9-10 9-4 0-6-2-5-4 3-6-2-11-8-11C7 9 1 13 0 18z" fill="#35c1d8" />
          <path d="M24 1.500C31 4 36 9 36 15c0 6-5 9-10 9-3 0-5-1-5-3 4-5 6-12 3-19.500z" fill="#57dc6a" />
          <path d="M36 26c-5 3-12 1-15-2-2 1-6-2-6-6-3 8 2 17 12 17 4-1 8-5 9-9z" fill="#15356b" />
          <rect y="25" width="18" height="12" fill="#c87a0b" />
          <path d="M0 30h18" stroke="#8a4a05" strokeWidth="2" />
          <circle cx="9" cy="30.500" r="1.500" fill="#ffe36a" />
        </Ico>
        <div className="mt-[5px] h-[5px] w-[24px] shrink-0 rounded-full bg-[#4cc2ff]" />
      </div>
      <Ico w={35} h={35} className="ml-[18px]">
        <path d="M9 8V2.500A1.500 1.500 0 0110.500 1h14A1.500 1.500 0 0126 2.500V8" stroke="#38b6ef" strokeWidth="2" />
        <path d="M0 5h35v26a4 4 0 01-4 4H4a4 4 0 01-4-4z" fill="#f0f0f0" />
        <path d="M10 12h7v7h-7z" fill="#f25022" />
        <path d="M18 12h7v7h-7z" fill="#7fba00" />
        <path d="M10 20h7v7h-7z" fill="#00a4ef" />
        <path d="M18 20h7v7h-7z" fill="#ffb900" />
        <path d="M9 4v4M26 4v4" stroke="#38b6ef" strokeWidth="2" />
      </Ico>
      <div className="ml-[31px] flex flex-col items-center pt-[12px]">
        <Ico w={35} h={33}>
          <rect x="10" width="24" height="20" rx="2" fill="#0f6cbd" />
          <path d="M18 5h8v8h-8z" fill="#28a8ea" />
          <path d="M26 5h8v8h-8z" fill="#50d9ff" />
          <path d="M8 32V17l13 6 14-6v13a2 2 0 01-2 2z" fill="#1e88dc" />
          <rect y="7" width="18" height="18" rx="2" fill="#0f62b8" />
          <circle cx="9" cy="16" r="4.200" stroke="#fff" strokeWidth="2.400" />
        </Ico>
        <div className="mt-[8px] h-[5px] w-[9px] rounded-full bg-[#9aa0b5]" />
      </div>
      <Ico w={18} h={11} className="ml-auto">
        <path d="M1 10l8-8.500 8 8.500" stroke="#fff" strokeWidth="1.400" />
      </Ico>
      <Ico w={25} h={16} className="ml-[15px] mt-[1px]">
        <path d="M6 16a6 6 0 01-1-11.500A7.500 7.500 0 0119 5.500 5.500 5.500 0 0119 16z" fill="#0f78d4" />
        <path d="M4 16l12-8 8 6a5 5 0 01-5 2z" fill="#2aa7ee" />
      </Ico>
      <div className="ml-[19px] flex w-[40px] flex-col items-center pt-px leading-[23px]">
        <span>ENG</span>
        <span>IN</span>
      </div>
      <Ico w={25} h={18} className="ml-[25px]">
        <path d="M1 7a16 16 0 0123 0M4.500 10.500a11.500 11.500 0 0116 0M8 13.700a6.500 6.500 0 019 0" stroke="#fff" strokeWidth="1.700" />
        <circle cx="12.500" cy="16" r="2" fill="#fff" />
      </Ico>
      <Ico w={25} h={20} className="ml-[11px]">
        <path d="M9 2v16l-5-4.500H1v-7h3z" stroke="#fff" strokeWidth="1.500" />
        <path d="M12.500 6.500c1.500 2 1.500 5 0 7" stroke="#fff" strokeWidth="1.500" />
        <path d="M16 4c3 3.500 3 8.500 0 12M19.500 1.500c5 5 5 12 0 17" stroke="#667078" strokeWidth="1.500" />
      </Ico>
      <Ico w={25} h={19} className="ml-[11px]">
        <path d="M9 4h10a2 2 0 012 2v9a2 2 0 01-2 2H6" stroke="#fff" strokeWidth="1.700" />
        <path d="M8 8h7v6H8zM22 8h2v5h-2zM0 4h8v3a4 4 0 01-8 0zM1.500 0H3v4H1.500zM5 0h1.500v4H5zM3.200 10h1.700v8H3.200z" fill="#fff" />
      </Ico>
      <div className="ml-[18px] flex w-[94px] flex-col items-end whitespace-nowrap leading-[23px] tracking-[0.200px]">
        <span>14:25</span>
        <span>13-09-2023</span>
      </div>
      <div className="ml-[11px] mr-[29px] flex h-[24px] w-[24px] items-center justify-center rounded-full bg-[#4cc2ff] text-[15px] text-[#0e1a24]">8</div>
    </div>
  );
}

export default function App() {
  return (
    <div className="flex h-[1200px] w-[1920px] flex-col overflow-hidden bg-[#3b3b3b] font-['Open_Sans','Noto_Sans',sans-serif]">
      <TabStrip />
      <Toolbar />
      <div className="flex h-[1023px] shrink-0">
        <div className="relative flex w-[1838px] shrink-0 flex-col border-t-2 border-[#6b6b6b]">
          <div className="flex min-h-0 flex-1 flex-col border-l border-t border-black bg-[#f6f6f6]">
            <TitleBar />
            <RibbonTabs />
            <Ribbon />
            <div className="flex h-[713px] shrink-0">
              <QueriesPane />
              <CenterPane />
              <SettingsPane />
            </div>
            <StatusBar />
            <RemoteTaskbar />
          </div>
          <ReplaceDialog />
        </div>
        <EdgeSidebar />
      </div>
      <HostTaskbar />
    </div>
  );
}
